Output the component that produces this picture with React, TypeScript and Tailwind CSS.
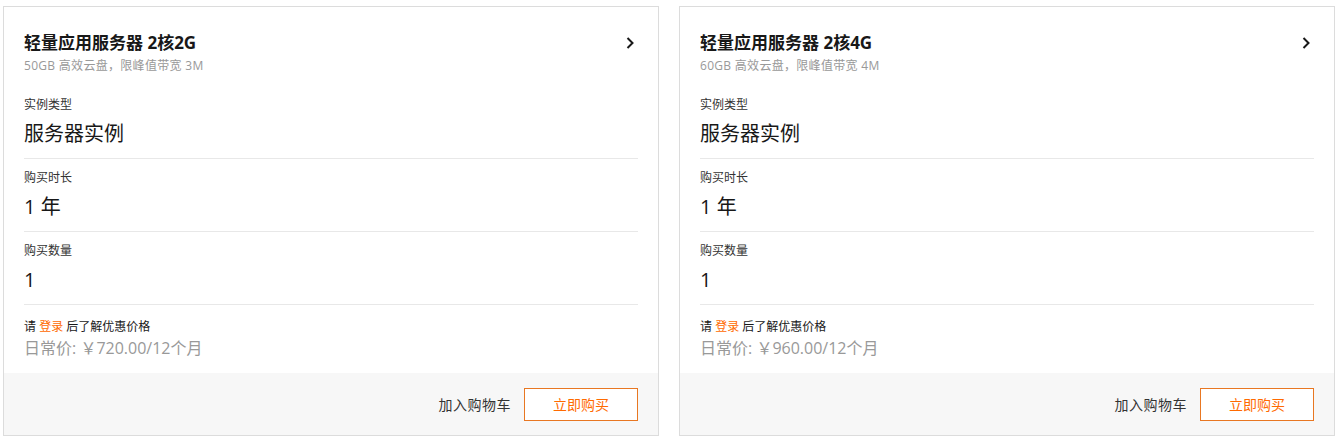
const products = [
  {
    title: "轻量应用服务器 2核2G",
    desc: "50GB 高效云盘，限峰值带宽 3M",
    price: "￥720.00/12个月",
  },
  {
    title: "轻量应用服务器 2核4G",
    desc: "60GB 高效云盘，限峰值带宽 4M",
    price: "￥960.00/12个月",
  },
];

const fields = [
  { label: "实例类型", value: "服务器实例" },
  { label: "购买时长", value: "1 年" },
  { label: "购买数量", value: "1" },
];

function ProductCard({ title, desc, price }: { title: string; desc: string; price: string }) {
  return (
    <div className="w-[656px] shrink-0 border border-[#dcdcdc] bg-white flex flex-col">
      <div className="px-5 pt-6">
        {/* Header */}
        <div className="flex items-center justify-between">
          <h3 className="text-[17px] leading-6 font-bold text-[#181818]">{title}</h3>
          <svg width="16" height="16" viewBox="0 0 16 16" fill="none" className="text-[#181818]">
            <path d="M5.5 3l5 5-5 5" stroke="currentColor" strokeWidth="2" />
          </svg>
        </div>
        <p className="mt-[2px] text-[12px] leading-[18px] tracking-[0.3px] text-[#999]">{desc}</p>

        {/* Config rows */}
        <div className="mt-[11px]">
          {fields.map((f) => (
            <div key={f.label} className="pt-[10px] pb-[9px] border-b border-[#e8e8e8]">
              <div className="text-[12px] leading-[18px] text-[#333]">{f.label}</div>
              <div className="mt-[5px] text-[20px] leading-[30px] text-[#181818]">{f.value}</div>
            </div>
          ))}
        </div>

        {/* Price */}
        <div className="pt-[13px] pb-[13px]">
          <div className="text-[12px] leading-[18px] text-[#181818]">
            请 <span className="text-[#ff6a00]">登录</span> 后了解优惠价格
          </div>
          <div className="text-[16px] leading-6 text-[#999]">日常价: {price}</div>
        </div>
      </div>

      {/* Footer */}
      <div className="h-[62px] bg-[#f7f7f7] px-5 flex items-center justify-end gap-[13px]">
        <span className="text-[14px] tracking-[0.5px] text-[#333]">加入购物车</span>
        <button className="w-[114px] h-[33px] border border-[#e87722] text-[14px] text-[#ff6a00] bg-white">
          立即购买
        </button>
      </div>
    </div>
  );
}

export default function App() {
  return (
    <div
      className="w-[1341px] h-[442px] bg-white pt-[6px] pl-[3px] flex items-start gap-5"
      style={{ fontFamily: '"Open Sans", "Noto Sans CJK SC", sans-serif' }}
    >
      {products.map((p) => (
        <ProductCard key={p.title} {...p} />
      ))}
    </div>
  );
}
